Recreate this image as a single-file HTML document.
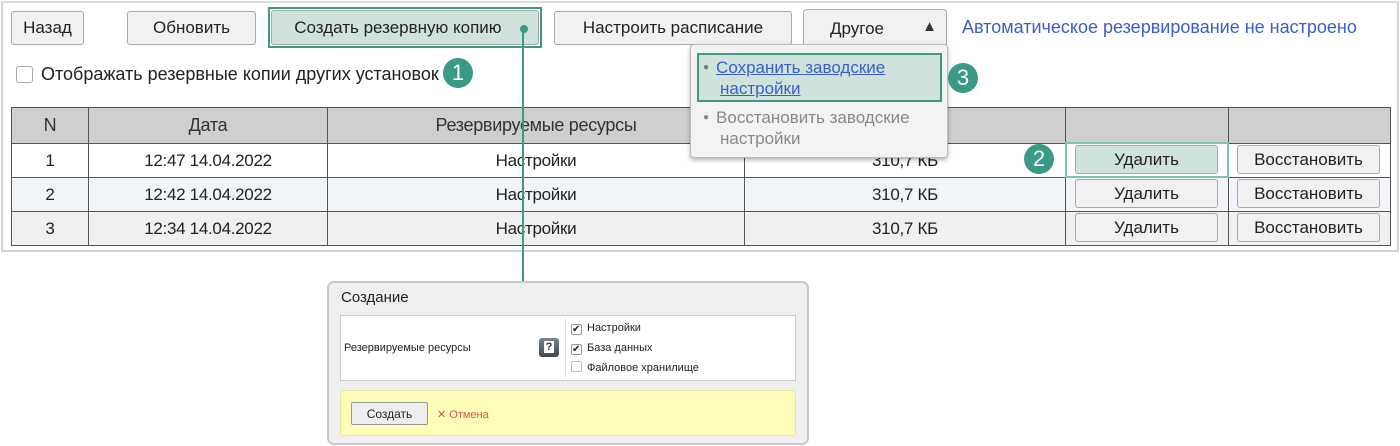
<!DOCTYPE html>
<html><head><meta charset="utf-8"><style>
*{box-sizing:border-box;margin:0;padding:0}
body{width:1400px;height:446px;background:#fff;position:relative;overflow:hidden;font-family:"Liberation Sans",sans-serif;color:#222}
.a{position:absolute}
.frame{left:1px;top:1px;width:1398px;height:251px;border:2px solid #d2d2d2;border-top-color:#ddd}
.btn{position:absolute;background:#f1f1f1;border:1px solid #a9a9a9;border-radius:3px;font-size:17px;display:flex;align-items:center;justify-content:center}
.badge{position:absolute;width:30px;height:30px;border-radius:50%;background:#3a9a86;color:#fff;font-size:22px;display:flex;align-items:center;justify-content:center}
table{position:absolute;left:11px;top:107px;border-collapse:collapse;font-size:17px;letter-spacing:-0.3px}
td,th{border:1px solid #555;text-align:center;padding:0;height:34px}
th{background:#cfcfcf;font-weight:normal;height:36px;font-size:18px;color:#333}
</style></head><body>
<div class="a frame"></div>
<div class="btn" style="left:11px;top:11px;width:73px;height:34px">Назад</div>
<div class="btn" style="left:127px;top:11px;width:129px;height:34px">Обновить</div>
<div class="a" style="left:268px;top:7px;width:274px;height:41px;border:2px solid #3a9a86"></div>
<div class="btn" style="left:271px;top:10px;width:268px;height:35px;background:#cfe3dc">Создать резервную копию&nbsp;&nbsp;&nbsp;</div>
<div class="btn" style="left:554px;top:11px;width:238px;height:34px">Настроить расписание</div>
<div class="btn" style="left:803px;top:9px;width:144px;height:38px;border-bottom:none;border-radius:4px 4px 0 0;justify-content:flex-start;padding-left:26px">Другое<span style="position:absolute;right:9px;top:8px;font-size:15px;color:#333">▲</span></div>
<div class="a" style="left:962px;top:17px;font-size:18px;color:#3a5fc8">Автоматическое резервирование не настроено</div>
<div class="a" style="left:16px;top:66px;width:17px;height:17px;border:1px solid #aaa;border-radius:3px;background:#fff"></div>
<div class="a" style="left:41px;top:64px;font-size:18px">Отображать резервные копии других установок</div>
<div class="badge" style="left:443px;top:58px">1</div>
<table>
<tr><th style="width:77px">N</th><th style="width:239px">Дата</th><th style="width:417px">Резервируемые ресурсы</th><th style="width:321px"></th><th style="width:163px"></th><th style="width:162px"></th></tr>
<tr><td>1</td><td>12:47 14.04.2022</td><td>Настройки</td><td>310,7 КБ</td><td></td><td></td></tr>
<tr style="background:#f1f5fa"><td>2</td><td>12:42 14.04.2022</td><td>Настройки</td><td>310,7 КБ</td><td></td><td></td></tr>
<tr style="background:#f0f0f0"><td>3</td><td>12:34 14.04.2022</td><td>Настройки</td><td>310,7 КБ</td><td></td><td></td></tr>
</table>
<div class="a" style="left:1065px;top:142px;width:164px;height:36px;border:2px solid #7fc4b3"></div>
<div class="btn" style="left:1075px;top:145px;width:143px;height:29px;background:#cfe3dc">Удалить</div>
<div class="btn" style="left:1237px;top:145px;width:143px;height:29px">Восстановить</div>
<div class="btn" style="left:1075px;top:179px;width:143px;height:29px">Удалить</div>
<div class="btn" style="left:1237px;top:179px;width:143px;height:29px">Восстановить</div>
<div class="btn" style="left:1075px;top:213px;width:143px;height:29px">Удалить</div>
<div class="btn" style="left:1237px;top:213px;width:143px;height:29px">Восстановить</div>
<div class="badge" style="left:1024px;top:144px">2</div>
<div class="a" style="left:690px;top:44px;width:258px;height:114px;background:#f3f3f3;border:1px solid #bbb;border-radius:4px;box-shadow:0 2px 5px rgba(0,0,0,.3)"></div>
<div class="a" style="left:697px;top:53px;width:245px;height:49px;background:#cfe3dc;border:2px solid #3a9a86"></div>
<div class="a" style="left:703px;top:57px;font-size:17px;line-height:21px;color:#3a5fc8"><span style="color:#777;font-size:10px;vertical-align:3px;margin-right:7px">●</span><u>Сохранить заводские</u><br><u style="margin-left:17px">настройки</u></div>
<div class="a" style="left:703px;top:107px;font-size:17px;line-height:21px;color:#888"><span style="font-size:10px;vertical-align:3px;margin-right:7px">●</span>Восстановить заводские<br><span style="margin-left:17px">настройки</span></div>
<div class="badge" style="left:948px;top:63px">3</div>
<div class="a" style="left:522px;top:28px;width:2px;height:255px;background:#3a9a86"></div>
<div class="a" style="left:520px;top:25px;width:8px;height:8px;border-radius:50%;background:#3a9a86"></div>
<div class="a" style="left:327px;top:281px;width:482px;height:164px;background:#efefef;border:2px solid #c8c8c8;border-radius:7px"></div>
<div class="a" style="left:341px;top:289px;font-size:15px;color:#222">Создание</div>
<div class="a" style="left:340px;top:315px;width:456px;height:66px;background:#fff;border:1px solid #ccc"></div>
<div class="a" style="left:565px;top:318px;width:1px;height:60px;background:#ddd"></div>
<div class="a" style="left:344px;top:342px;font-size:11px">Резервируемые ресурсы</div>
<div class="a" style="left:539px;top:338px;width:20px;height:19px;border-radius:3px;background:linear-gradient(#7a8590,#3f4850);color:#fff;font-size:11px;font-weight:bold;text-align:center;line-height:19px"><span style="background:#fff;color:#333;padding:0 2px">?</span></div>
<div class="a" style="left:571px;top:318px;font-size:11px;line-height:20px">
<div><span style="display:inline-block;width:11px;height:11px;border:1px solid #999;border-radius:2px;font-size:10px;line-height:9px;vertical-align:-1px;margin-right:5px">✔</span>Настройки</div>
<div><span style="display:inline-block;width:11px;height:11px;border:1px solid #999;border-radius:2px;font-size:10px;line-height:9px;vertical-align:-1px;margin-right:5px">✔</span>База данных</div>
<div><span style="display:inline-block;width:11px;height:11px;border:1px solid #bbb;border-radius:2px;vertical-align:-1px;margin-right:5px"></span>Файловое хранилище</div>
</div>
<div class="a" style="left:340px;top:390px;width:456px;height:46px;background:#fdfdb9;border:1px solid #e6e6a0;border-radius:3px"></div>
<div class="btn" style="left:351px;top:402px;width:77px;height:23px;font-size:12px;background:#eee;border-color:#999;border-radius:2px">Создать</div>
<div class="a" style="left:437px;top:408px;font-size:11px;color:#d9534f">✕ Отмена</div>
</body></html>
